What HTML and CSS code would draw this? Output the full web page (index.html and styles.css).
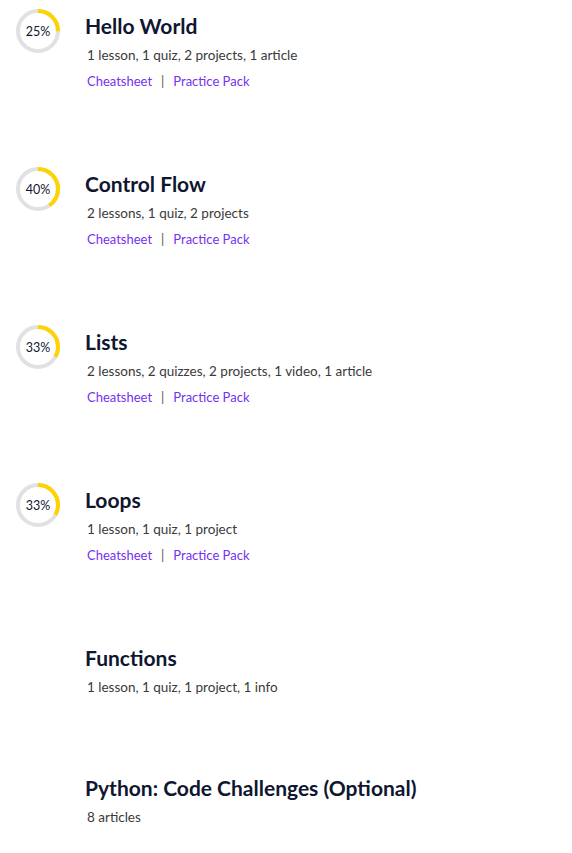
FILE: index.html
```html
<!DOCTYPE html>
<html lang="en">
<head>
<meta charset="utf-8">
<title>Syllabus</title>
<link rel="stylesheet" href="styles.css">
</head>
<body>
<ul class="modules">
  <li class="module">
    <div class="ring-col">
      <div class="ring">
        <svg viewBox="0 0 44 44" width="44" height="44"><circle class="track" cx="22" cy="22" r="20"/><circle class="bar" cx="22" cy="22" r="20" style="stroke-dasharray: 31.4 125.7"/></svg>
        <span class="pct">25%</span>
      </div>
    </div>
    <div class="info">
      <h2 class="title">Hello World</h2>
      <p class="meta">1 lesson, 1 quiz, 2 projects, 1 article</p>
      <p class="links"><a href="#">Cheatsheet</a><span class="sep">|</span><a href="#">Practice Pack</a></p>
    </div>
  </li>
  <li class="module">
    <div class="ring-col">
      <div class="ring">
        <svg viewBox="0 0 44 44" width="44" height="44"><circle class="track" cx="22" cy="22" r="20"/><circle class="bar" cx="22" cy="22" r="20" style="stroke-dasharray: 50.3 125.7"/></svg>
        <span class="pct">40%</span>
      </div>
    </div>
    <div class="info">
      <h2 class="title">Control Flow</h2>
      <p class="meta">2 lessons, 1 quiz, 2 projects</p>
      <p class="links"><a href="#">Cheatsheet</a><span class="sep">|</span><a href="#">Practice Pack</a></p>
    </div>
  </li>
  <li class="module">
    <div class="ring-col">
      <div class="ring">
        <svg viewBox="0 0 44 44" width="44" height="44"><circle class="track" cx="22" cy="22" r="20"/><circle class="bar" cx="22" cy="22" r="20" style="stroke-dasharray: 41.5 125.7"/></svg>
        <span class="pct">33%</span>
      </div>
    </div>
    <div class="info">
      <h2 class="title">Lists</h2>
      <p class="meta">2 lessons, 2 quizzes, 2 projects, 1 video, 1 article</p>
      <p class="links"><a href="#">Cheatsheet</a><span class="sep">|</span><a href="#">Practice Pack</a></p>
    </div>
  </li>
  <li class="module">
    <div class="ring-col">
      <div class="ring">
        <svg viewBox="0 0 44 44" width="44" height="44"><circle class="track" cx="22" cy="22" r="20"/><circle class="bar" cx="22" cy="22" r="20" style="stroke-dasharray: 41.5 125.7"/></svg>
        <span class="pct">33%</span>
      </div>
    </div>
    <div class="info">
      <h2 class="title">Loops</h2>
      <p class="meta">1 lesson, 1 quiz, 1 project</p>
      <p class="links"><a href="#">Cheatsheet</a><span class="sep">|</span><a href="#">Practice Pack</a></p>
    </div>
  </li>
  <li class="module">
    <div class="ring-col"></div>
    <div class="info">
      <h2 class="title">Functions</h2>
      <p class="meta">1 lesson, 1 quiz, 1 project, 1 info</p>
    </div>
  </li>
  <li class="module">
    <div class="ring-col"></div>
    <div class="info">
      <h2 class="title">Python: Code Challenges (Optional)</h2>
      <p class="meta">8 articles</p>
    </div>
  </li>
</ul>
</body>
</html>
```
FILE: styles.css
```css
html, body {
  margin: 0;
  padding: 0;
  background: #ffffff;
}
body {
  font-family: "Lato", "Noto Sans", sans-serif;
  color: #10162f;
}
.modules {
  list-style: none;
  margin: 0;
  padding: 9px 0 0 16px;
  display: flex;
  flex-direction: column;
}
.module {
  display: grid;
  grid-template-columns: 69px 1fr;
  min-height: 158px;
}
.module:nth-child(5) {
  min-height: 130px;
}
.module:last-child {
  min-height: 0;
}
.ring {
  position: relative;
  width: 44px;
  height: 44px;
}
.ring svg {
  display: block;
  transform: rotate(-90deg);
}
.ring circle {
  fill: none;
  stroke-width: 4;
}
.ring .track {
  stroke: #e1e1e1;
}
.ring .bar {
  stroke: #ffd300;
}
.pct {
  position: absolute;
  inset: 0;
  display: flex;
  align-items: center;
  justify-content: center;
  font-size: 12.5px;
  color: #10162f;
}
.info {
  padding-top: 3px;
}
.title {
  margin: 0;
  font-size: 21px;
  line-height: 28px;
  font-weight: 700;
  color: #10162f;
}
.meta {
  margin: 5px 0 0 2px;
  font-size: 13.5px;
  line-height: 20px;
  color: #3a3a3a;
}
.links {
  margin: 7px 0 0 2px;
  font-size: 13px;
  line-height: 18px;
  color: #555;
}
.links a {
  color: #7431f0;
  text-decoration: none;
}
.sep {
  margin: 0 9px;
}
```
